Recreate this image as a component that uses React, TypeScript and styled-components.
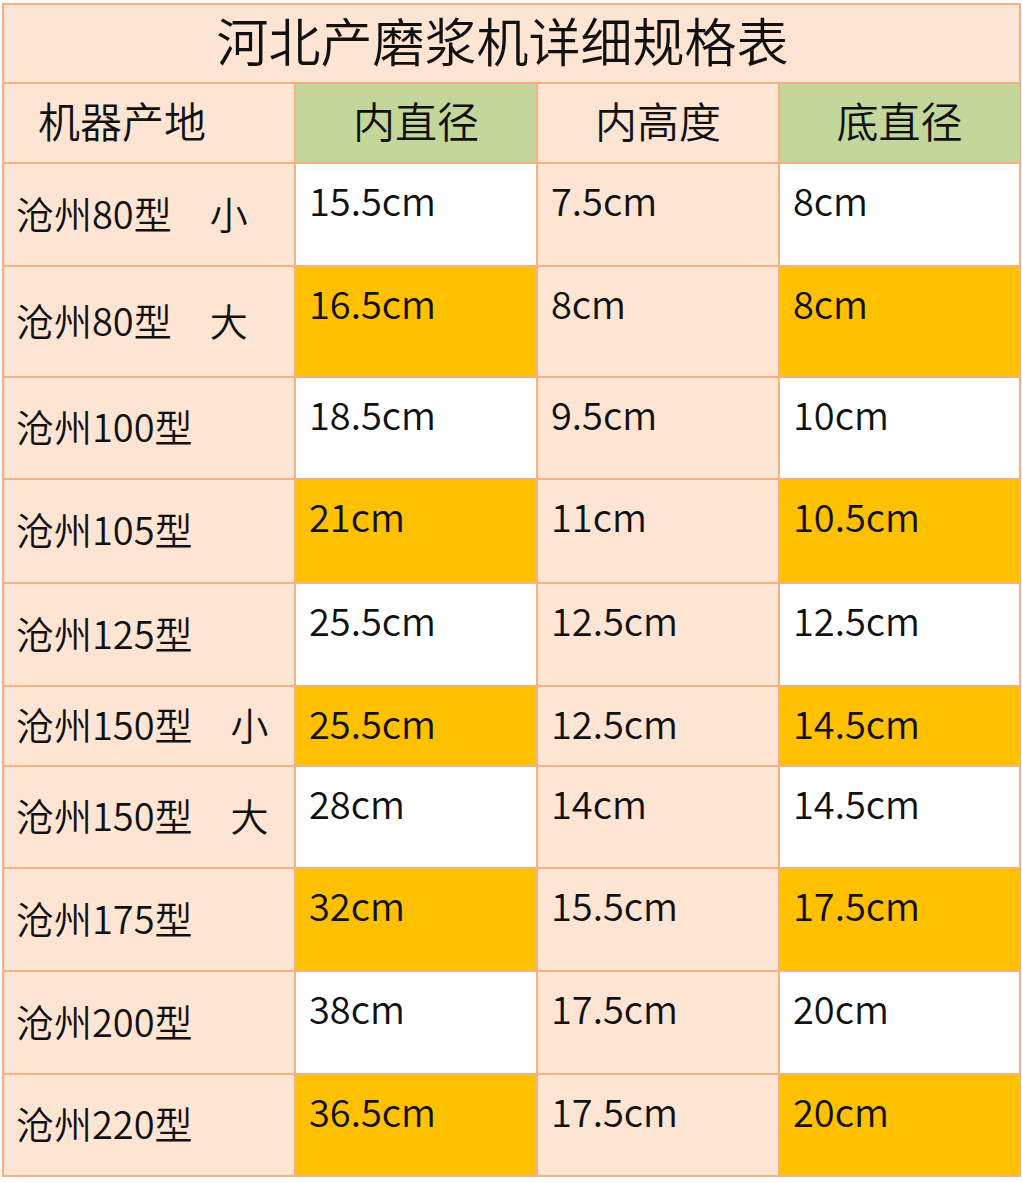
import React from "react";
import styled, { createGlobalStyle } from "styled-components";

type Fill = "white" | "yellow" | "peach";

interface Row {
  name: string;
  inner: string;
  height: string;
  base: string;
  h: number;
}

const rows: Row[] = [
  { name: "沧州80型　小", inner: "15.5cm", height: "7.5cm", base: "8cm", h: 103 },
  { name: "沧州80型　大", inner: "16.5cm", height: "8cm", base: "8cm", h: 111 },
  { name: "沧州100型", inner: "18.5cm", height: "9.5cm", base: "10cm", h: 102 },
  { name: "沧州105型", inner: "21cm", height: "11cm", base: "10.5cm", h: 104 },
  { name: "沧州125型", inner: "25.5cm", height: "12.5cm", base: "12.5cm", h: 103 },
  { name: "沧州150型　小", inner: "25.5cm", height: "12.5cm", base: "14.5cm", h: 80 },
  { name: "沧州150型　大", inner: "28cm", height: "14cm", base: "14.5cm", h: 102 },
  { name: "沧州175型", inner: "32cm", height: "15.5cm", base: "17.5cm", h: 103 },
  { name: "沧州200型", inner: "38cm", height: "17.5cm", base: "20cm", h: 103 },
  { name: "沧州220型", inner: "36.5cm", height: "17.5cm", base: "20cm", h: 102 },
];

const fills: Record<Fill, string> = {
  white: "#ffffff",
  yellow: "#ffc000",
  peach: "#fde4d3",
};

function App(): JSX.Element {
  return (
    <>
      <GlobalStyle />
      <Page>
        <Sheet>
          <colgroup>
            <col style={{ width: 292 }} />
            <col style={{ width: 242 }} />
            <col style={{ width: 242 }} />
            <col style={{ width: 241 }} />
          </colgroup>
          <tbody>
            <tr>
              <Title colSpan={4}>河北产磨浆机详细规格表</Title>
            </tr>
            <tr>
              <HeadCell $green={false}>
                <HeadLeft>机器产地</HeadLeft>
              </HeadCell>
              <HeadCell $green>内直径</HeadCell>
              <HeadCell $green={false}>内高度</HeadCell>
              <HeadCell $green>底直径</HeadCell>
            </tr>
            {rows.map((r, i) => {
              const alt: Fill = i % 2 === 0 ? "white" : "yellow";
              return (
                <BodyRow key={i} $h={r.h}>
                  <NameCell>{r.name}</NameCell>
                  <ValueCell $fill={alt}>{r.inner}</ValueCell>
                  <ValueCell $fill="peach">{r.height}</ValueCell>
                  <ValueCell $fill={alt}>{r.base}</ValueCell>
                </BodyRow>
              );
            })}
          </tbody>
        </Sheet>
      </Page>
    </>
  );
}

const GlobalStyle = createGlobalStyle`
  body {
    margin: 0;
    background: #ffffff;
    font-family: "Noto Sans CJK SC", "Noto Sans", sans-serif;
    font-weight: 350;
    color: #111111;
  }
`;

const Page = styled.div`
  width: 1022px;
  height: 1182px;
  padding: 3px 0 0 2px;
  box-sizing: border-box;
`;

const Sheet = styled.table`
  border-collapse: collapse;
  table-layout: fixed;
  width: 1017px;
  border: 2px solid #f4b183;

  td {
    border: 2px solid #f4b183;
    box-sizing: border-box;
    padding: 0;
  }
`;

const Title = styled.td`
  height: 79px;
  background: #fde4d3;
  text-align: center;
  vertical-align: middle;
  font-size: 52px;
  line-height: 1;
  padding: 0 18px 8px 0 !important;
`;

const HeadCell = styled.td<{ $green: boolean }>`
  height: 80px;
  background: ${(p) => (p.$green ? "#c4d79b" : "#fde4d3")};
  text-align: center;
  vertical-align: middle;
  font-size: 42px;
  line-height: 1;
  padding-bottom: 7px !important;
`;

const HeadLeft = styled.div`
  text-align: left;
  padding-left: 34px;
`;

const BodyRow = styled.tr<{ $h: number }>`
  height: ${(p) => p.$h}px;
`;

const NameCell = styled.td`
  background: #fde4d3;
  vertical-align: middle;
  font-size: 38px;
  line-height: 1;
  padding: 0 0 4px 12px !important;
  white-space: pre;
`;

const ValueCell = styled.td<{ $fill: Fill }>`
  background: ${(p) => fills[p.$fill]};
  vertical-align: top;
  font-size: 38px;
  line-height: 1;
  padding: 17px 0 0 13px !important;
`;

export default App;
